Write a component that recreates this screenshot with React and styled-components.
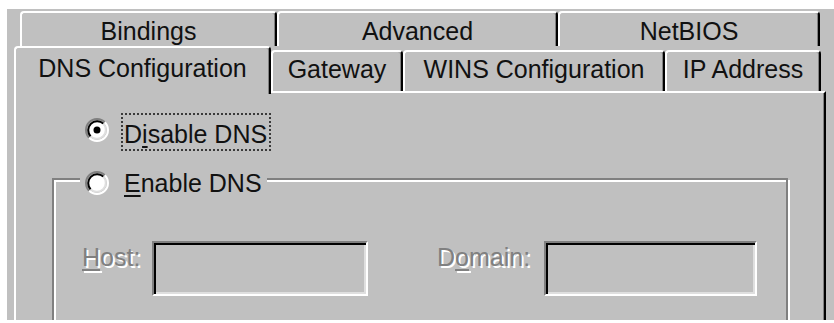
import React from 'react';
import styled, { createGlobalStyle } from 'styled-components';

const Global = createGlobalStyle`
  html, body { margin: 0; padding: 0; background: #fff; }
  body { font-family: "Liberation Sans", Arial, sans-serif; }
`;

const Screen = styled.div`
  width: 834px;
  height: 323px;
  box-sizing: border-box;
  padding: 9px 0 0 7px;
  background: #fff;
  overflow: hidden;
`;

const Dialog = styled.div`
  height: 311px;
  background: #c0c0c0;
  overflow: hidden;
  font-size: 25px;
  line-height: 29px;
  color: #111;
  display: flex;
  flex-direction: column;
`;

const BackRow = styled.div`
  display: flex;
  height: 37px;
  margin: 2px 0 0 13px;
`;

const TabBase = styled.div`
  box-sizing: border-box;
  flex: none;
  text-align: center;
  white-space: nowrap;
  background: #c0c0c0;
  border-top: 2px solid #fff;
  border-left: 2px solid #fff;
  border-right: 2px solid #000;
  box-shadow: inset -1px 0 0 #808080;
  border-radius: 4px 4px 0 0;
`;

const BackTab = styled(TabBase)`
  width: ${p => p.$w}px;
  height: 100%;
  padding-top: 4px;
`;

const FrontRow = styled.div`
  display: flex;
  align-items: flex-end;
  height: 45px;
  margin-left: 7px;
`;

const FrontTab = styled(TabBase)`
  width: ${p => p.$w}px;
  height: ${p => (p.$active ? 48 : 41)}px;
  padding-top: ${p => (p.$active ? 6 : 3)}px;
  margin-bottom: ${p => (p.$active ? -3 : 0)}px;
  position: relative;
  z-index: ${p => (p.$active ? 2 : 0)};
`;

const Panel = styled.div`
  box-sizing: border-box;
  width: 812px;
  margin-left: 7px;
  flex: 1;
  border-top: 2px solid #fff;
  border-left: 2px solid #fff;
  border-right: 2px solid #000;
  box-shadow: inset -1px 0 0 #808080;
  padding-top: 20px;
  display: flex;
  flex-direction: column;
  align-items: flex-start;
`;

const OptionRow = styled.div`
  display: flex;
  align-items: flex-start;
  margin-left: 69px;
`;

const RadioBox = styled.svg`
  flex: none;
  width: 24px;
  height: 24px;
  margin-top: ${p => p.$top || 0}px;
`;

const FocusLabel = styled.span`
  margin-left: 12px;
  border: 2px dotted #3a3a3a;
  padding: 5px 2px 0 1px;
`;

const Key = styled.u`
  text-decoration-thickness: 2px;
  text-underline-offset: 3px;
`;

const Group = styled.div`
  box-sizing: border-box;
  width: 736px;
  height: 200px;
  margin: 27px 0 0 36px;
  border: 2px solid #808080;
  box-shadow: 2px 2px 0 #fff, inset 2px 2px 0 #fff;
  display: flex;
  flex-direction: column;
  align-items: flex-start;
`;

const Legend = styled.div`
  display: flex;
  align-items: center;
  height: 30px;
  margin: -12px 0 0 26px;
  padding: 0 5px;
  background: #c0c0c0;
`;

const LegendText = styled.span`
  margin-left: 15px;
`;

const FieldRow = styled.div`
  display: flex;
  align-items: flex-start;
  margin: 43px 0 0 28px;
`;

const DisabledLabel = styled.span`
  flex: none;
  box-sizing: border-box;
  width: ${p => p.$w}px;
  margin-left: ${p => p.$ml || 0}px;
  padding-top: 2px;
  color: #808080;
  text-shadow: 2px 2px 0 #fff;
  white-space: nowrap;
`;

const Field = styled.div`
  flex: none;
  box-sizing: border-box;
  width: ${p => p.$w}px;
  height: 55px;
  background: #c0c0c0;
  border: 2px solid;
  border-color: #808080 #fff #fff #808080;
  box-shadow: inset 2px 2px 0 #000, inset -2px -2px 0 #dfdfdf;
`;

const Radio = ({ checked, top }) => {
  const d = (r) => (r * Math.SQRT1_2).toFixed(2);
  const arc = (r, first) => {
    const k = d(r);
    return first
      ? `M ${12 - k} ${12 + +k} A ${r} ${r} 0 0 1 ${12 + +k} ${12 - k}`
      : `M ${12 + +k} ${12 - k} A ${r} ${r} 0 0 1 ${12 - k} ${12 + +k}`;
  };
  return (
    <RadioBox viewBox="0 0 24 24" $top={top}>
      <circle cx="12" cy="12" r="8.5" fill="#fff" />
      <path d={arc(11, true)} stroke="#808080" strokeWidth="2" fill="none" />
      <path d={arc(11, false)} stroke="#fff" strokeWidth="2" fill="none" />
      <path d={arc(9, true)} stroke="#000" strokeWidth="2" fill="none" />
      <path d={arc(9, false)} stroke="#dfdfdf" strokeWidth="2" fill="none" />
      {checked && <circle cx="12" cy="12" r="3.5" fill="#000" />}
    </RadioBox>
  );
};

const backTabs = [
  { label: 'Bindings', w: 257 },
  { label: 'Advanced', w: 281 },
  { label: 'NetBIOS', w: 262 },
];

const frontTabs = [
  { label: 'DNS Configuration', w: 257, active: true },
  { label: 'Gateway', w: 132 },
  { label: 'WINS Configuration', w: 262 },
  { label: 'IP Address', w: 156 },
];

export default function App() {
  return (
    <>
      <Global />
      <Screen>
        <Dialog>
          <BackRow>
            {backTabs.map(t => (
              <BackTab key={t.label} $w={t.w}>{t.label}</BackTab>
            ))}
          </BackRow>
          <FrontRow>
            {frontTabs.map(t => (
              <FrontTab key={t.label} $w={t.w} $active={t.active}>{t.label}</FrontTab>
            ))}
          </FrontRow>
          <Panel>
            <OptionRow>
              <Radio checked top={5} />
              <FocusLabel>D<Key>i</Key>sable DNS</FocusLabel>
            </OptionRow>
            <Group>
              <Legend>
                <Radio />
                <LegendText><Key>E</Key>nable DNS</LegendText>
              </Legend>
              <FieldRow>
                <DisabledLabel $w={70}><Key>H</Key>ost:</DisabledLabel>
                <Field $w={216} />
                <DisabledLabel $w={107} $ml={69}>D<Key>o</Key>main:</DisabledLabel>
                <Field $w={213} />
              </FieldRow>
            </Group>
          </Panel>
        </Dialog>
      </Screen>
    </>
  );
}
